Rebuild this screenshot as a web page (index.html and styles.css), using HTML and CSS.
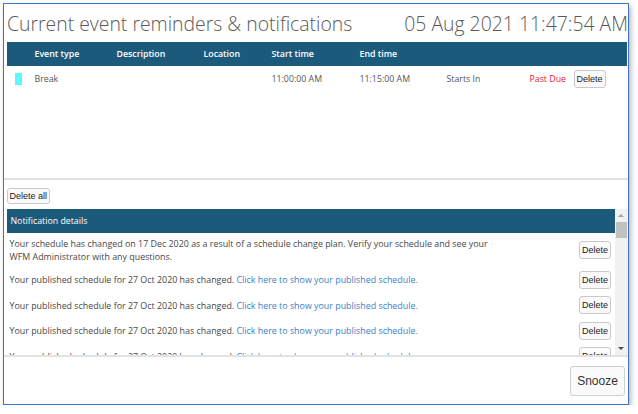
FILE: index.html
```html
<!DOCTYPE html>
<html lang="en">
<head>
    <meta charset="UTF-8">
    <title>Current event reminders &amp; notifications</title>
    <link rel="stylesheet" href="styles.css">
</head>
<body>
    <div class="dialog">
        <div class="title-row">
            <h1 class="title">Current event reminders &amp; notifications</h1>
            <div class="clock">05 Aug 2021 11:47:54 AM</div>
        </div>

        <!-- Event reminders -->
        <div class="events">
            <table class="event-table">
                <colgroup>
                    <col class="c-swatch"><col class="c-type"><col class="c-desc"><col class="c-loc">
                    <col class="c-start"><col class="c-end"><col class="c-in"><col class="c-due"><col class="c-del">
                </colgroup>
                <thead>
                    <tr>
                        <th></th>
                        <th>Event type</th>
                        <th>Description</th>
                        <th>Location</th>
                        <th>Start time</th>
                        <th>End time</th>
                        <th></th>
                        <th></th>
                        <th></th>
                    </tr>
                </thead>
                <tbody>
                    <tr>
                        <td><span class="swatch"></span></td>
                        <td>Break</td>
                        <td></td>
                        <td></td>
                        <td>11:00:00 AM</td>
                        <td>11:15:00 AM</td>
                        <td>Starts In</td>
                        <td class="past-due">Past Due</td>
                        <td><button class="btn">Delete</button></td>
                    </tr>
                </tbody>
            </table>
        </div>

        <div class="bulk">
            <button class="btn btn-all">Delete all</button>
        </div>

        <!-- Notifications -->
        <div class="notes">
            <div class="note-list">
                <div class="note-head">Notification details</div>
                <div class="note">
                    <p class="note-text">Your schedule has changed on 17 Dec 2020 as a result of a schedule change plan. Verify your schedule and see your WFM Administrator with any questions.</p>
                    <button class="btn">Delete</button>
                </div>
                <div class="note">
                    <p class="note-text">Your published schedule for 27 Oct 2020 has changed. <a href="#">Click here to show your published schedule.</a></p>
                    <button class="btn">Delete</button>
                </div>
                <div class="note">
                    <p class="note-text">Your published schedule for 27 Oct 2020 has changed. <a href="#">Click here to show your published schedule.</a></p>
                    <button class="btn">Delete</button>
                </div>
                <div class="note">
                    <p class="note-text">Your published schedule for 27 Oct 2020 has changed. <a href="#">Click here to show your published schedule.</a></p>
                    <button class="btn">Delete</button>
                </div>
                <div class="note">
                    <p class="note-text">Your published schedule for 27 Oct 2020 has changed. <a href="#">Click here to show your published schedule.</a></p>
                    <button class="btn">Delete</button>
                </div>
            </div>
            <div class="scrollbar">
                <span class="arrow up"></span>
                <span class="thumb"></span>
                <span class="track"></span>
                <span class="arrow down"></span>
            </div>
        </div>

        <div class="footer">
            <button class="btn btn-snooze">Snooze</button>
        </div>
    </div>
</body>
</html>
```

FILE: styles.css
```css
html, body {
    margin: 0;
    padding: 0;
    background: #fff;
}
body {
    font-family: 'Open Sans', 'Noto Sans', sans-serif;
    color: #444;
}
.dialog {
    box-sizing: border-box;
    width: 626px;
    height: 402px;
    margin: 3px 0 0 3px;
    border: 1.5px solid #3f72c5;
    box-shadow: 2px 3px 5px rgba(0, 0, 0, 0.28);
    display: flex;
    flex-direction: column;
    background: #fff;
}
.title-row {
    display: flex;
    justify-content: space-between;
    align-items: center;
    height: 38px;
    padding: 0 0 0 3px;
}
.title, .clock {
    margin: 0;
    font-size: 19.4px;
    font-weight: 300;
    color: #5a5a5a;
    white-space: nowrap;
}
/* Event table */
.events {
    height: 136px;
    padding: 0 0 0 2.5px;
    border-bottom: 2px solid #e2e2e2;
}
.event-table {
    width: 620px;
    border-collapse: collapse;
    table-layout: fixed;
    font-size: 8.8px;
}
.c-swatch { width: 28px; }
.c-type { width: 82px; }
.c-desc { width: 87px; }
.c-loc { width: 68px; }
.c-start { width: 88px; }
.c-end { width: 87px; }
.c-in { width: 83px; }
.c-due { width: 44px; }
.event-table th {
    background: #1c5a7c;
    color: #fff;
    font-weight: 600;
    text-align: left;
    height: 24px;
    padding: 0;
}
.event-table td {
    height: 26px;
    padding: 0;
    color: #555;
}
.event-table td.past-due {
    color: #e0242f;
}
.swatch {
    display: block;
    width: 7px;
    height: 12px;
    margin-left: 8px;
    background: #5ff6fb;
}
.btn {
    font-family: 'Liberation Sans', Arial, sans-serif;
    font-size: 9px;
    color: #222;
    background: #fafafa;
    border: 1px solid #c9c9c9;
    border-radius: 3px;
    padding: 0 2px;
    height: 18px;
    cursor: pointer;
}
.bulk {
    display: flex;
    align-items: flex-start;
    padding: 8px 0 0 2.5px;
    height: 21px;
}
.btn-all {
    height: 16px;
    padding: 0 2px;
}
/* Notification list */
.notes {
    display: flex;
    height: 146px;
    padding-left: 2.5px;
    border-bottom: 2px solid #e2e2e2;
}
.note-list {
    flex: 1;
    overflow: hidden;
}
.note-head {
    background: #1c5a7c;
    color: #fff;
    font-size: 8.8px;
    height: 24px;
    line-height: 24px;
    padding-left: 4px;
}
.note {
    display: flex;
    justify-content: space-between;
    align-items: center;
    padding: 4px 4px 3.5px 3px;
    min-height: 18px;
}
.note-text {
    margin: 0;
    max-width: 500px;
    font-size: 8.9px;
    line-height: 13px;
    color: #484848;
}
.note-text a {
    color: #3b80c8;
    text-decoration: none;
}
.scrollbar {
    width: 13px;
    display: flex;
    flex-direction: column;
    align-items: center;
    background: #f1f1f1;
}
.arrow {
    height: 13px;
    width: 13px;
    position: relative;
}
.arrow::after {
    content: "";
    position: absolute;
    left: 3px;
    border-left: 3.5px solid transparent;
    border-right: 3.5px solid transparent;
}
.arrow.up::after {
    top: 5px;
    border-bottom: 3.5px solid #a3a3a3;
}
.arrow.down::after {
    top: 5px;
    border-top: 3.5px solid #505050;
}
.thumb {
    width: 11px;
    height: 16px;
    background: #c1c1c1;
}
.track {
    flex: 1;
}
.footer {
    flex: 1;
    display: flex;
    justify-content: flex-end;
    align-items: center;
    padding-right: 3px;
}
.btn-snooze {
    font-size: 12px;
    height: 30px;
    width: 55px;
    color: #333;
    border-color: #cfcfcf;
}
```
